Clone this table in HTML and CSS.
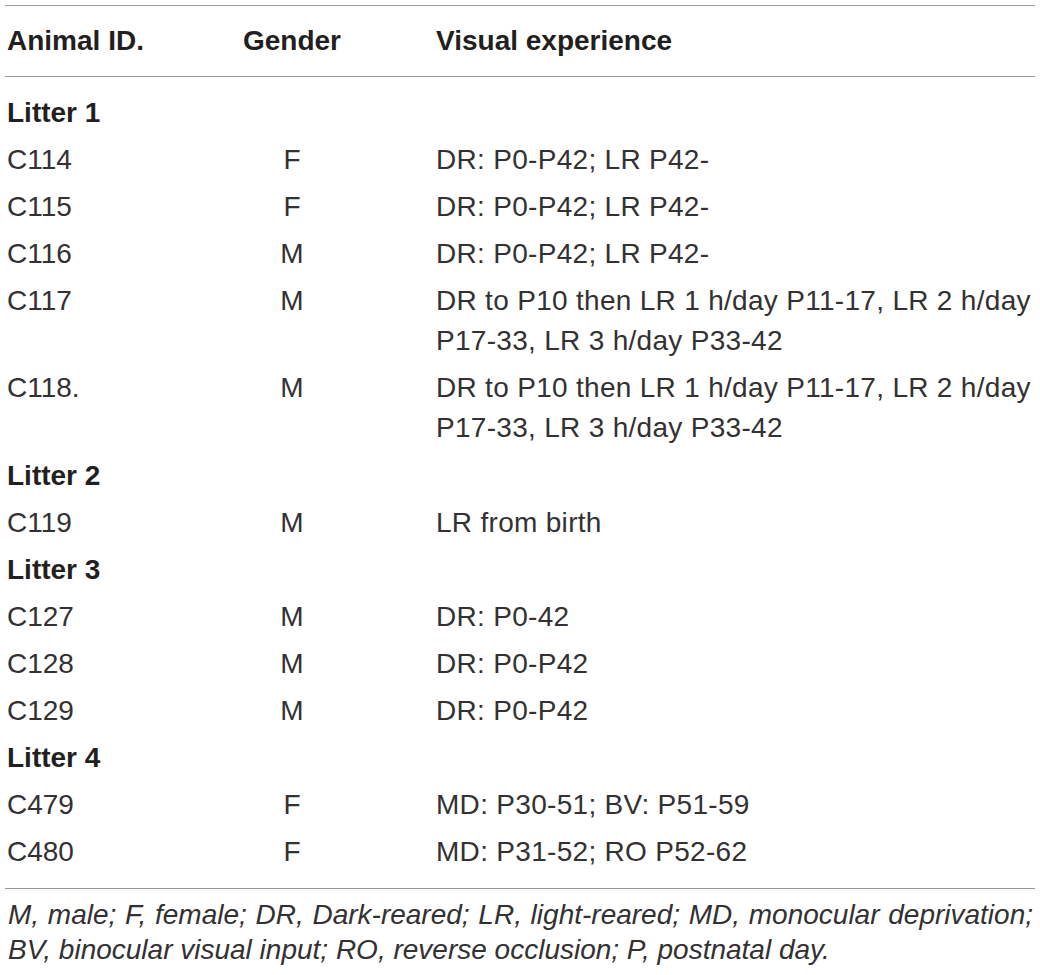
FILE: index.html
```html
<!DOCTYPE html>
<html lang="en">
<head>
<meta charset="utf-8">
<title>Animals</title>
<link rel="stylesheet" href="styles.css">
</head>
<body>
<div class="wrap">
  <table class="tbl">
    <colgroup>
      <col class="c-id">
      <col class="c-gender">
      <col class="c-vis">
    </colgroup>
    <thead>
      <tr>
        <th class="id">Animal ID.</th>
        <th class="gender">Gender</th>
        <th class="vis">Visual experience</th>
      </tr>
    </thead>
    <tbody>
      <tr class="group first"><td colspan="3">Litter 1</td></tr>
      <tr><td class="id">C114</td><td class="gender">F</td><td class="vis">DR: P0-P42; LR P42-</td></tr>
      <tr><td class="id">C115</td><td class="gender">F</td><td class="vis">DR: P0-P42; LR P42-</td></tr>
      <tr><td class="id">C116</td><td class="gender">M</td><td class="vis">DR: P0-P42; LR P42-</td></tr>
      <tr><td class="id">C117</td><td class="gender">M</td><td class="vis">DR to P10 then LR 1 h/day P11-17, LR 2 h/day P17-33, LR 3 h/day P33-42</td></tr>
      <tr><td class="id">C118.</td><td class="gender">M</td><td class="vis">DR to P10 then LR 1 h/day P11-17, LR 2 h/day P17-33, LR 3 h/day P33-42</td></tr>
      <tr class="group"><td colspan="3">Litter 2</td></tr>
      <tr><td class="id">C119</td><td class="gender">M</td><td class="vis">LR from birth</td></tr>
      <tr class="group"><td colspan="3">Litter 3</td></tr>
      <tr><td class="id">C127</td><td class="gender">M</td><td class="vis">DR: P0-42</td></tr>
      <tr><td class="id">C128</td><td class="gender">M</td><td class="vis">DR: P0-P42</td></tr>
      <tr><td class="id">C129</td><td class="gender">M</td><td class="vis">DR: P0-P42</td></tr>
      <tr class="group"><td colspan="3">Litter 4</td></tr>
      <tr><td class="id">C479</td><td class="gender">F</td><td class="vis">MD: P30-51; BV: P51-59</td></tr>
      <tr class="last"><td class="id">C480</td><td class="gender">F</td><td class="vis">MD: P31-52; RO P52-62</td></tr>
    </tbody>
  </table>
  <p class="note">M, male; F, female; DR, Dark-reared; LR, light-reared; MD, monocular deprivation; BV, binocular visual input; RO, reverse occlusion; P, postnatal day.</p>
</div>
</body>
</html>
```

FILE: styles.css
```css
html, body {
  margin: 0;
  padding: 0;
  background: #ffffff;
}

body {
  font-family: "Liberation Sans", Arial, Helvetica, sans-serif;
  font-size: 28px;
  color: #333132;
}

.wrap {
  margin: 5px 5px 0;
  width: 1030px;
}

.tbl {
  width: 100%;
  border-collapse: collapse;
  table-layout: fixed;
  border-top: 1px solid #9a9a9a;
  border-bottom: 1px solid #9a9a9a;
}

.c-id { width: 187px; }
.c-gender { width: 200px; }
.c-vis { width: auto; }

.tbl th,
.tbl td {
  padding: 3px 0 4.1px;
  line-height: 40px;
  vertical-align: top;
  text-align: left;
}

.tbl thead th {
  font-weight: bold;
  color: #231f20;
  padding-top: 15px;
  padding-bottom: 15px;
  border-bottom: 1px solid #9a9a9a;
}

.tbl .id { padding-left: 2px; }
.tbl .gender { text-align: center; }
.tbl .vis { padding-left: 44px; }
.tbl td.vis { letter-spacing: 0.3px; }

.tbl .group td {
  font-weight: bold;
  color: #231f20;
  padding-left: 2px;
}

.tbl .first td { padding-top: 16px; }
.tbl .last td { padding-bottom: 16px; }

.note {
  margin: 8px 0 0;
  padding: 0 2px 0 3px;
  font-style: italic;
  line-height: 35px;
  text-align: justify;
}
```
